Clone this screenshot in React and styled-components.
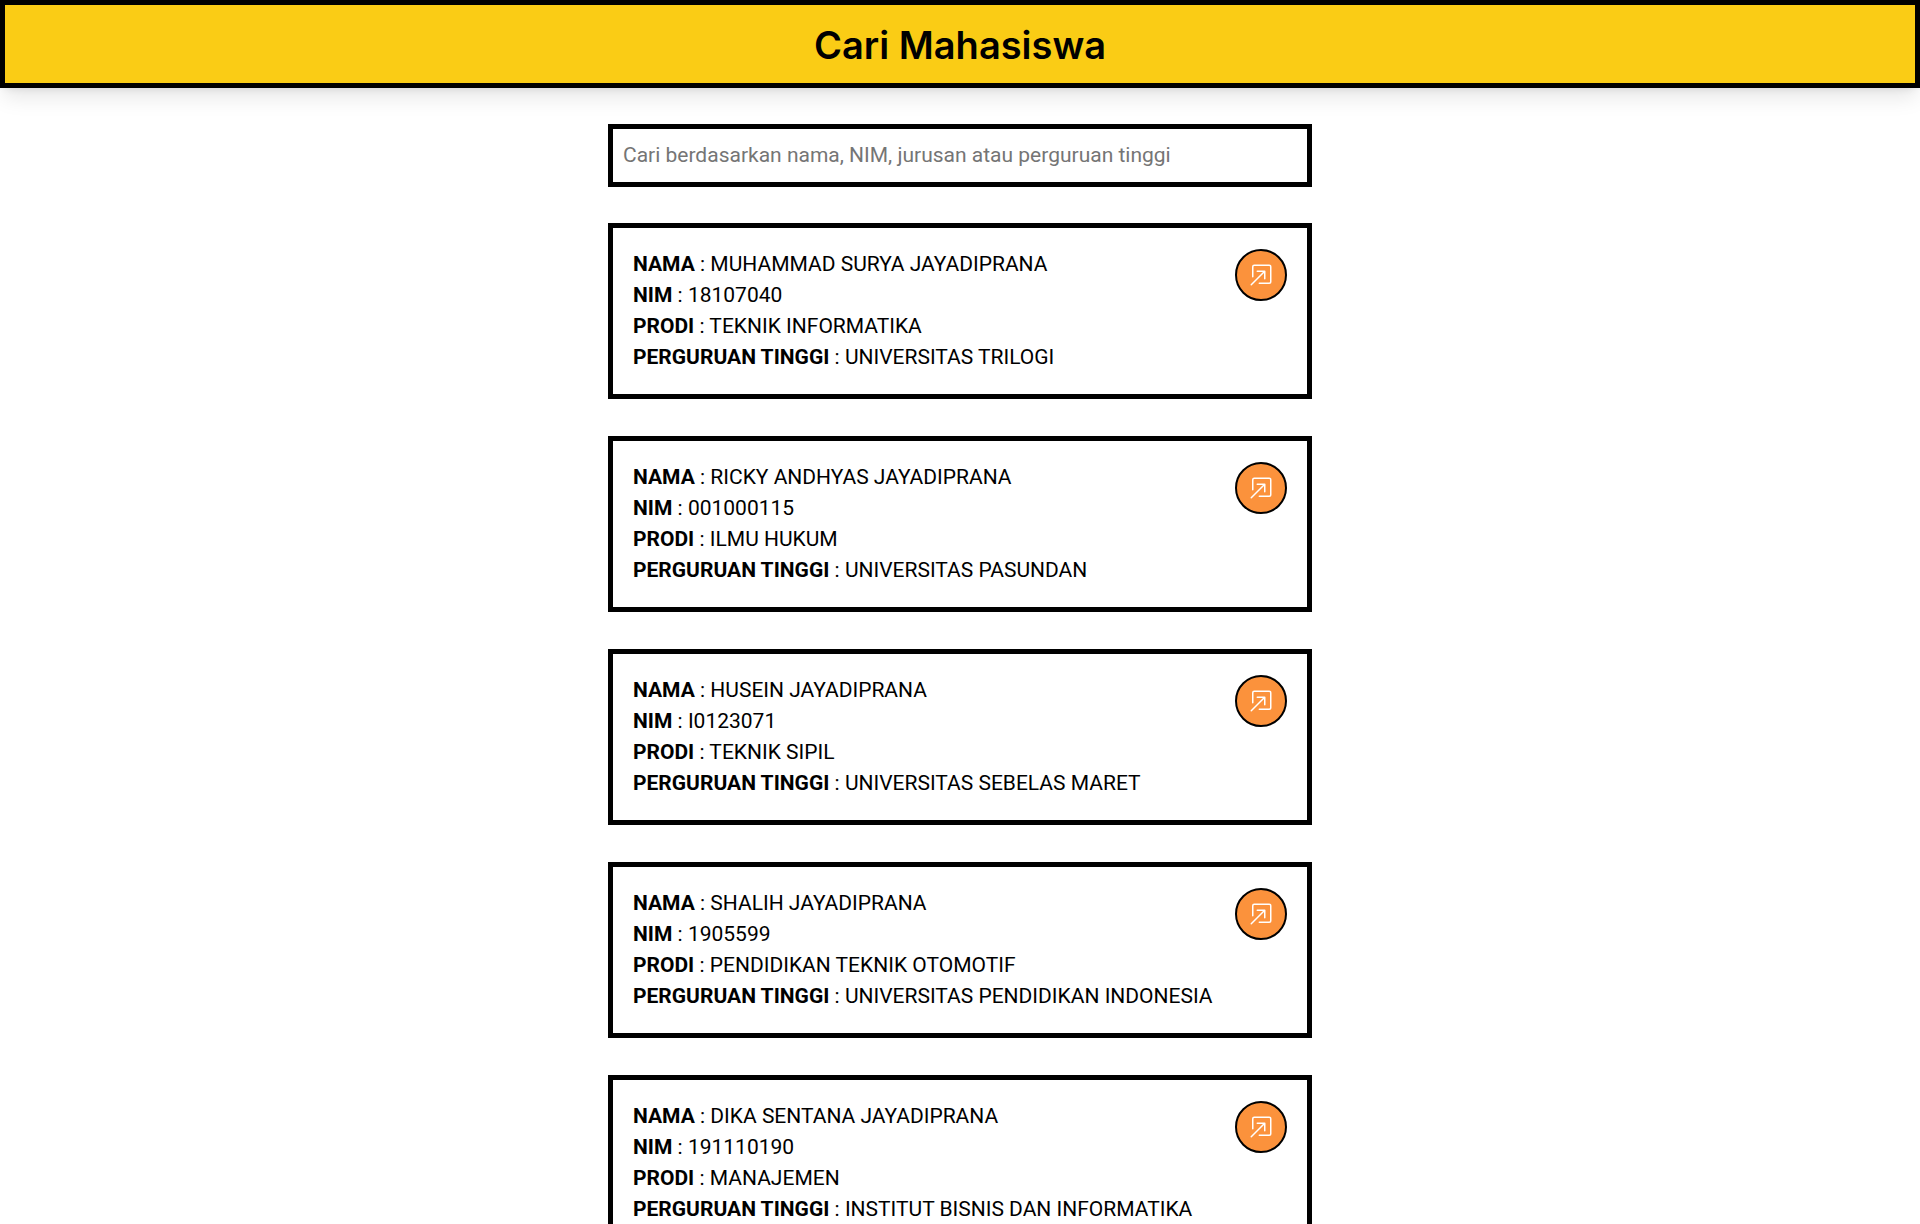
import React, { useState } from "react";
import styled, { createGlobalStyle } from "styled-components";
import { BsBoxArrowInUpRight } from "react-icons/bs";

const GlobalStyle = createGlobalStyle`
  *, *::before, *::after {
    box-sizing: border-box;
  }
  body {
    margin: 0;
    background: #ffffff;
    color: #000000;
    font-family: Roboto, "Liberation Sans", sans-serif;
    font-size: 21px;
    line-height: 31px;
  }
`;

const Header = styled.header`
  padding: 14px 20px 12px;
  border: 5px solid #000000;
  background: #facc15;
  text-align: center;
  box-shadow: 0 13px 20px -4px rgba(0, 0, 0, 0.1),
    0 5px 8px -5px rgba(0, 0, 0, 0.1);
`;

const Title = styled.h1`
  margin: 0;
  font-family: Inter, "Open Sans", sans-serif;
  font-size: 38px;
  font-weight: 600;
  line-height: 52px;
`;

const Main = styled.main`
  display: flex;
  flex-direction: column;
  gap: 36px;
  width: 100%;
  max-width: 704px;
  margin: 0 auto;
  padding: 36px 0;
`;

const SearchInput = styled.input`
  width: 100%;
  padding: 11px 10px;
  border: 5px solid #000000;
  border-radius: 0;
  outline: none;
  background: #ffffff;
  color: #000000;
  font: inherit;

  &::placeholder {
    color: #757575;
  }
`;

const StudentList = styled.ul`
  display: flex;
  flex-direction: column;
  gap: 37px;
  margin: 0;
  padding: 0;
  list-style: none;
`;

const Card = styled.li`
  display: flex;
  align-items: flex-start;
  justify-content: space-between;
  padding: 21px 20px;
  border: 5px solid #000000;
  background: #ffffff;
`;

const Details = styled.div`
  min-width: 0;
`;

const Field = styled.p`
  margin: 0;
`;

const Label = styled.span`
  font-weight: 700;
`;

const OpenButton = styled.button`
  display: flex;
  flex: none;
  align-items: center;
  justify-content: center;
  width: 52px;
  height: 52px;
  padding: 0;
  border: 2px solid #000000;
  border-radius: 50%;
  background: #fb923c;
  color: #ffffff;
  cursor: pointer;
`;

const students = [
  { nama: "MUHAMMAD SURYA JAYADIPRANA", nim: "18107040", prodi: "TEKNIK INFORMATIKA", pt: "UNIVERSITAS TRILOGI" },
  { nama: "RICKY ANDHYAS JAYADIPRANA", nim: "001000115", prodi: "ILMU HUKUM", pt: "UNIVERSITAS PASUNDAN" },
  { nama: "HUSEIN JAYADIPRANA", nim: "I0123071", prodi: "TEKNIK SIPIL", pt: "UNIVERSITAS SEBELAS MARET" },
  { nama: "SHALIH JAYADIPRANA", nim: "1905599", prodi: "PENDIDIKAN TEKNIK OTOMOTIF", pt: "UNIVERSITAS PENDIDIKAN INDONESIA" },
  { nama: "DIKA SENTANA JAYADIPRANA", nim: "191110190", prodi: "MANAJEMEN", pt: "INSTITUT BISNIS DAN INFORMATIKA" },
];

function StudentCard({ student }) {
  return (
    <Card>
      <Details>
        <Field><Label>NAMA</Label> : {student.nama}</Field>
        <Field><Label>NIM</Label> : {student.nim}</Field>
        <Field><Label>PRODI</Label> : {student.prodi}</Field>
        <Field><Label>PERGURUAN TINGGI</Label> : {student.pt}</Field>
      </Details>
      <OpenButton type="button" aria-label={`Buka ${student.nama}`}>
        <BsBoxArrowInUpRight size={24} />
      </OpenButton>
    </Card>
  );
}

export default function App() {
  const [query, setQuery] = useState("");
  const needle = query.trim().toLowerCase();
  const shown = students.filter((s) =>
    Object.values(s).some((value) => value.toLowerCase().includes(needle))
  );

  return (
    <>
      <GlobalStyle />
      <Header>
        <Title>Cari Mahasiswa</Title>
      </Header>
      <Main>
        <SearchInput
          type="text"
          aria-label="Cari mahasiswa"
          placeholder="Cari berdasarkan nama, NIM, jurusan atau perguruan tinggi"
          value={query}
          onChange={(event) => setQuery(event.target.value)}
        />
        <StudentList>
          {shown.map((student) => (
            <StudentCard key={student.nim} student={student} />
          ))}
        </StudentList>
      </Main>
    </>
  );
}
